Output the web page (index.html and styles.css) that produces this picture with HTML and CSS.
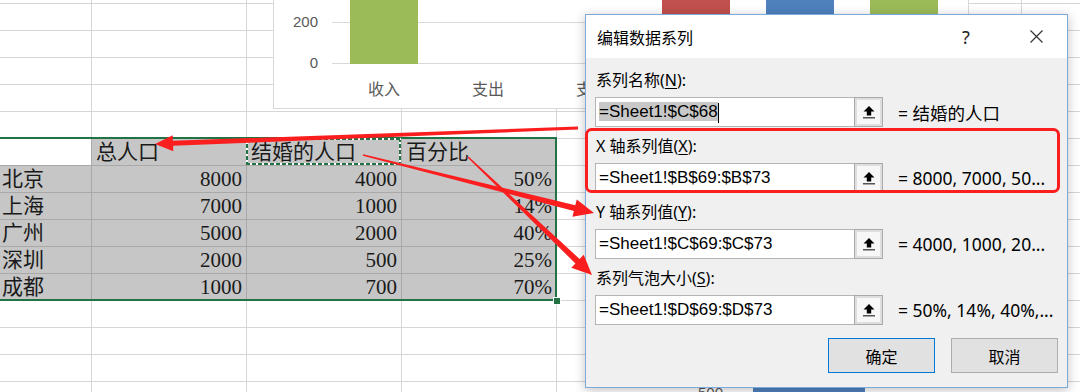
FILE: index.html
```html
<!DOCTYPE html>
<html lang="zh-CN">
<head>
    <meta charset="UTF-8">
    <title>编辑数据系列</title>
    <link rel="stylesheet" href="styles.css">
</head>
<body>
    <!-- worksheet with the selected range -->
    <div class="sheet">
        <div class="data">
            <div class="cell active"></div>
            <div class="cell">总人口</div>
            <div class="cell copy">结婚的人口</div>
            <div class="cell">百分比</div>

            <div class="cell">北京</div>
            <div class="cell num">8000</div>
            <div class="cell num">4000</div>
            <div class="cell num">50%</div>

            <div class="cell">上海</div>
            <div class="cell num">7000</div>
            <div class="cell num">1000</div>
            <div class="cell num">14%</div>

            <div class="cell">广州</div>
            <div class="cell num">5000</div>
            <div class="cell num">2000</div>
            <div class="cell num">40%</div>

            <div class="cell">深圳</div>
            <div class="cell num">2000</div>
            <div class="cell num">500</div>
            <div class="cell num">25%</div>

            <div class="cell">成都</div>
            <div class="cell num">1000</div>
            <div class="cell num">700</div>
            <div class="cell num">70%</div>

            <span class="handle"></span>
        </div>
    </div>

    <!-- charts floating on the sheet -->
    <div class="chart">
        <div class="axis"><span>200</span><span>0</span></div>
        <div class="plot">
            <div class="cat"><i class="bar green"></i></div>
            <div class="cat"></div>
            <div class="cat"></div>
            <div class="cat"><i class="bar red"></i></div>
            <div class="cat"><i class="bar blue"></i></div>
            <div class="cat"><i class="bar green"></i></div>
        </div>
        <div class="cats"><span>收入</span><span>支出</span><span>支出</span></div>
    </div>
    <div class="chart3">
        <span class="tick">500</span>
        <i class="bar blue"></i>
    </div>

    <!-- Edit series dialog -->
    <div class="dialog">
        <div class="titlebar">
            <span class="title">编辑数据系列</span>
            <span class="help">?</span>
            <span class="close">
                <svg width="13" height="13" viewBox="0 0 13 13"><path d="M0.5 0.5L12.5 12.5M12.5 0.5L0.5 12.5" stroke="#333" stroke-width="1.2" fill="none"/></svg>
            </span>
        </div>
        <div class="body">
            <div class="group">
                <div class="label">系列名称(<u>N</u>):</div>
                <div class="field">
                    <div class="input"><span class="sel">=Sheet1!$C$68</span><span class="caret"></span></div>
                    <span class="pick"><svg width="12" height="13" viewBox="0 0 12 13"><path d="M6 0L11.5 5.5H8.2V9.5H3.8V5.5H0.5Z" fill="#000"/><rect x="0" y="11" width="12" height="1.5" fill="#555"/></svg></span>
                    <span class="value">= 结婚的人口</span>
                </div>
            </div>
            <div class="group">
                <div class="label">X 轴系列值(<u>X</u>):</div>
                <div class="field">
                    <div class="input">=Sheet1!$B$69:$B$73</div>
                    <span class="pick"><svg width="12" height="13" viewBox="0 0 12 13"><path d="M6 0L11.5 5.5H8.2V9.5H3.8V5.5H0.5Z" fill="#000"/><rect x="0" y="11" width="12" height="1.5" fill="#555"/></svg></span>
                    <span class="value">= 8000, 7000, 50...</span>
                </div>
            </div>
            <div class="group">
                <div class="label">Y 轴系列值(<u>Y</u>):</div>
                <div class="field">
                    <div class="input">=Sheet1!$C$69:$C$73</div>
                    <span class="pick"><svg width="12" height="13" viewBox="0 0 12 13"><path d="M6 0L11.5 5.5H8.2V9.5H3.8V5.5H0.5Z" fill="#000"/><rect x="0" y="11" width="12" height="1.5" fill="#555"/></svg></span>
                    <span class="value">= 4000, 1000, 20...</span>
                </div>
            </div>
            <div class="group">
                <div class="label">系列气泡大小(<u>S</u>):</div>
                <div class="field">
                    <div class="input">=Sheet1!$D$69:$D$73</div>
                    <span class="pick"><svg width="12" height="13" viewBox="0 0 12 13"><path d="M6 0L11.5 5.5H8.2V9.5H3.8V5.5H0.5Z" fill="#000"/><rect x="0" y="11" width="12" height="1.5" fill="#555"/></svg></span>
                    <span class="value">= 50%, 14%, 40%,...</span>
                </div>
            </div>
            <div class="actions">
                <button class="btn default">确定</button>
                <button class="btn">取消</button>
            </div>
        </div>
    </div>

    <!-- red annotations drawn over the screenshot -->
    <svg class="marks" width="1080" height="392" viewBox="0 0 1080 392">
        <rect x="586.5" y="129.5" width="472" height="62" rx="5" fill="none" stroke="#fa1e1e" stroke-width="3"/>
        <polygon fill="#fa1e1e" points="577.9,126.5 172.9,140.8 172.7,135.3 155,144 173.3,151.3 173.1,145.8 578.1,129.5"/>
        <polygon fill="#fa1e1e" points="362.8,155.7 573.9,211 572.4,216.8 594,213 576.8,199.4 575.3,205.2 363.2,154.3"/>
        <polygon fill="#fa1e1e" points="467.5,157.5 575.4,263.4 571.3,267.7 592,275 583.7,254.7 579.6,259 468.5,156.5"/>
    </svg>
</body>
</html>
```

FILE: styles.css
```css
body {
    margin: 0;
    width: 1080px;
    height: 392px;
    overflow: hidden;
    position: relative;
    background: #fff;
    font-family: "Noto Sans", "Noto Sans CJK SC", sans-serif;
}

/* worksheet grid */
.sheet {
    height: 392px;
    padding-top: 138px;
    box-sizing: border-box;
    background-image:
        linear-gradient(to right, #d6d6d6 1px, transparent 1px),
        linear-gradient(to bottom, #d6d6d6 1px, transparent 1px);
    background-size: 155px 100%, 100% 27px;
    background-position: 91px 0, 0 3px;
}
.data {
    position: relative;
    width: 556px;
    display: grid;
    grid-template-columns: 91px 155px 155px 155px;
    grid-auto-rows: 27px;
    font-family: "Liberation Serif", "Noto Sans CJK SC", serif;
    font-size: 21px;
    color: #1a1a1a;
}
.data::after {
    content: '';
    position: absolute;
    top: -1px;
    right: -1px;
    bottom: -1px;
    left: -3px;
    border: 2px solid #217346;
    z-index: 1;
}
.cell {
    position: relative;
    background: #c6c6c6;
    border-top: 1px solid #a9a9a9;
    border-left: 1px solid #a9a9a9;
    padding: 0 4px 0 4px;
    line-height: 26px;
    white-space: nowrap;
}
.cell:nth-child(4n+1) {
    border-left: none;
    padding-left: 2px;
}
.cell.active {
    background: #fff;
}
.cell.num {
    text-align: right;
}
/* copied range: marching ants */
.copy::after {
    content: '';
    position: absolute;
    top: -1px;
    right: 0;
    bottom: 0;
    left: -1px;
    z-index: 3;
    background:
        repeating-linear-gradient(to right, #217346 0 4px, #fff 4px 6px) top / 100% 2px no-repeat,
        repeating-linear-gradient(to right, #217346 0 4px, #fff 4px 6px) bottom / 100% 2px no-repeat,
        repeating-linear-gradient(to bottom, #217346 0 4px, #fff 4px 6px) left / 2px 100% no-repeat,
        repeating-linear-gradient(to bottom, #217346 0 4px, #fff 4px 6px) right / 2px 100% no-repeat;
}
.handle {
    position: absolute;
    right: -5px;
    bottom: -5px;
    width: 6px;
    height: 6px;
    background: #217346;
    border: 1px solid #fff;
    z-index: 4;
}

/* chart */
.chart {
    position: absolute;
    left: 273px;
    top: -30px;
    width: 696px;
    height: 139px;
    box-sizing: border-box;
    border: 1px solid #d9d9d9;
    background: #fff;
    display: grid;
    grid-template-columns: 58px 1fr;
    grid-template-rows: 93px 1fr;
    font-family: "Liberation Sans", "Noto Sans CJK SC", sans-serif;
    color: #595959;
}
.axis {
    padding: 30px 14px 0 0;
    font-size: 15px;
}
.axis span {
    display: block;
    height: 41px;
    line-height: 41px;
    text-align: right;
}
.plot {
    display: flex;
    background-image: linear-gradient(to bottom, #d9d9d9 1px, transparent 1px);
    background-size: 100% 41px;
    background-position: 0 10px;
}
.cat {
    width: 104px;
    display: flex;
    justify-content: center;
}
.bar {
    display: block;
    width: 68px;
    height: 100%;
}
.green { background: #9bbb59; }
.red { background: #c0504d; }
.blue { background: #4f81bd; }
.cats {
    grid-column: 2;
    display: flex;
    padding-top: 14px;
    font-family: "Noto Sans CJK SC", sans-serif;
    font-size: 16px;
    line-height: 20px;
}
.cats span {
    width: 104px;
    text-align: center;
}
.chart3 {
    position: absolute;
    left: 598px;
    top: 384px;
    width: 470px;
    height: 30px;
    padding-left: 100px;
    box-sizing: border-box;
    background: #fff;
    display: flex;
    font-family: "Liberation Sans", sans-serif;
    font-size: 15px;
    color: #595959;
}
.chart3 .bar {
    width: 112px;
    margin-left: 30px;
}

/* dialog */
.dialog {
    position: absolute;
    left: 585px;
    top: 14px;
    width: 483px;
    box-sizing: border-box;
    border: 1px solid #7eaadb;
    background: #f0f0f0;
    box-shadow: 0 2px 10px rgba(0, 0, 0, 0.25);
    z-index: 5;
    color: #000;
}
.titlebar {
    height: 43px;
    background: #fff;
    display: flex;
    align-items: center;
    padding: 0 11px;
    font-size: 16px;
}
.titlebar .title {
    flex: 1;
    font-family: "Noto Sans CJK SC", sans-serif;
}
.titlebar .help {
    width: 40px;
    margin-right: 30px;
    text-align: center;
    font-size: 18px;
    color: #222;
}
.titlebar .close {
    width: 40px;
    display: flex;
    justify-content: center;
}
.body {
    padding: 11px 9px 14px 9px;
}
.group + .group {
    margin-top: 8px;
}
.label {
    font-size: 16px;
    line-height: 22px;
    margin-bottom: 6px;
    padding-left: 1px;
}
.label u {
    text-underline-offset: 2px;
}
.field {
    display: flex;
    align-items: center;
}
.input {
    width: 260px;
    height: 30px;
    box-sizing: border-box;
    border: 1px solid #b5b5b5;
    background: #fff;
    font-family: "Liberation Sans", "Noto Sans CJK SC", sans-serif;
    font-size: 17px;
    line-height: 28px;
    padding-left: 3px;
    white-space: nowrap;
    overflow: hidden;
}
.sel {
    background: #c8c8c8;
}
.caret {
    display: inline-block;
    width: 1px;
    height: 20px;
    background: #000;
    vertical-align: middle;
}
.pick {
    width: 29px;
    height: 30px;
    margin-left: -1px;
    box-sizing: border-box;
    border: 1px solid #a9a9a9;
    background: #f7f7f7;
    box-shadow: inset 0 0 0 2px #dedede;
    display: flex;
    align-items: center;
    justify-content: center;
}
.value {
    margin-left: 15px;
    font-size: 17.5px;
    white-space: nowrap;
}
.actions {
    display: flex;
    justify-content: flex-end;
    gap: 16px;
    margin-top: 13px;
}
.btn {
    width: 107px;
    height: 35px;
    box-sizing: border-box;
    border: 1px solid #adadad;
    background: #e1e1e1;
    font-family: "Noto Sans CJK SC", sans-serif;
    font-size: 16px;
    color: #000;
    padding: 0;
}
.btn.default {
    border-color: #0078d7;
}

.marks {
    position: absolute;
    left: 0;
    top: 0;
    z-index: 10;
    pointer-events: none;
}
```
